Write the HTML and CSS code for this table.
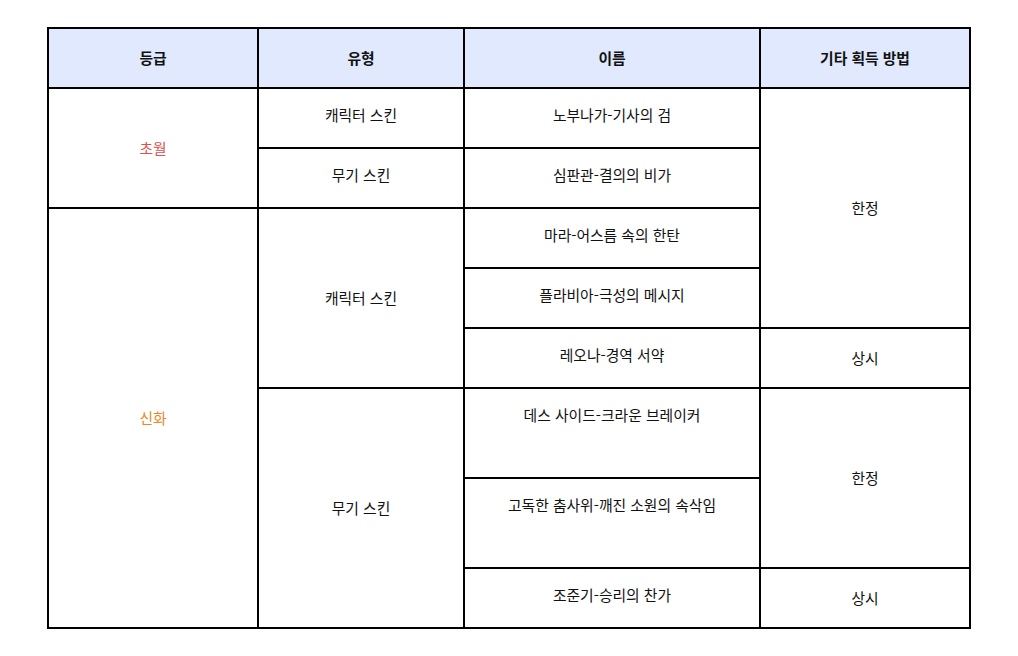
FILE: index.html
```html
<!DOCTYPE html>
<html lang="ko">
<head>
<meta charset="utf-8">
<link rel="stylesheet" href="styles.css">
</head>
<body>
<div class="wrap">
<table class="skins">
  <colgroup>
    <col class="c1"><col class="c2"><col class="c3"><col class="c4">
  </colgroup>
  <thead>
    <tr class="head"><th>등급</th><th>유형</th><th>이름</th><th>기타 획득 방법</th></tr>
  </thead>
  <tbody>
    <tr class="r">
      <td rowspan="2" class="trans">초월</td>
      <td class="top">캐릭터 스킨</td>
      <td class="top">노부나가-기사의 검</td>
      <td rowspan="4">한정</td>
    </tr>
    <tr class="r">
      <td class="top">무기 스킨</td>
      <td class="top">심판관-결의의 비가</td>
    </tr>
    <tr class="r">
      <td rowspan="6" class="myth">신화</td>
      <td rowspan="3">캐릭터 스킨</td>
      <td class="top">마라-어스름 속의 한탄</td>
    </tr>
    <tr class="r">
      <td class="top">플라비아-극성의 메시지</td>
    </tr>
    <tr class="r">
      <td class="top">레오나-경역 서약</td>
      <td>상시</td>
    </tr>
    <tr class="tall">
      <td rowspan="3">무기 스킨</td>
      <td class="top">데스 사이드-크라운 브레이커</td>
      <td rowspan="2">한정</td>
    </tr>
    <tr class="tall">
      <td class="top">고독한 춤사위-깨진 소원의 속삭임</td>
    </tr>
    <tr class="r">
      <td class="top">조준기-승리의 찬가</td>
      <td>상시</td>
    </tr>
  </tbody>
</table>
</div>
</body>
</html>
```
FILE: styles.css
```css
html, body {
  margin: 0;
  padding: 0;
  background: #ffffff;
}
body {
  font-family: "Noto Sans CJK KR", "Noto Sans", sans-serif;
  font-size: 14.8px;
  color: #111111;
}
.wrap {
  padding-top: 27px;
}
.skins {
  margin: 0 auto;
  width: 922px;
  border-collapse: collapse;
  table-layout: fixed;
}
.c1 { width: 210px; }
.c2 { width: 206px; }
.c3 { width: 296px; }
.c4 { width: 210px; }
.skins th,
.skins td {
  border: 2px solid #000000;
  text-align: center;
  vertical-align: middle;
  padding: 0 8px;
  line-height: 20px;
}
.skins th {
  background: #e0e9fd;
  font-weight: 700;
  color: #111111;
}
.head { height: 60px; }
.r { height: 60px; }
.tall { height: 90px; }
.skins td.top {
  vertical-align: top;
  padding-top: 16px;
}
.trans { color: #d9534f; }
.myth { color: #e8891f; }
```
